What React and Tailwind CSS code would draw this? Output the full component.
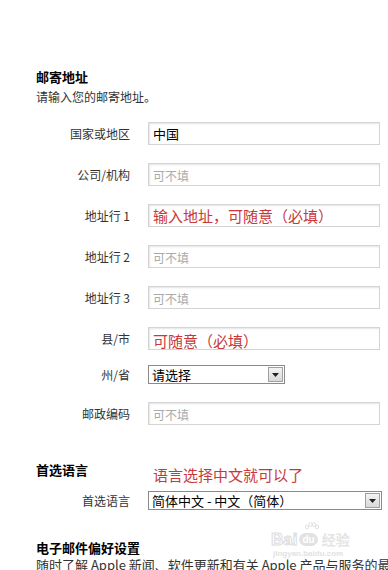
import { useState } from 'react'

const rows = [
  { label: '国家或地区', value: '中国' },
  { label: '公司/机构', placeholder: '可不填' },
  { label: '地址行 1', hint: '输入地址，可随意（必填）' },
  { label: '地址行 2', placeholder: '可不填' },
  { label: '地址行 3', placeholder: '可不填' },
  { label: '县/市', hint: '可随意（必填）', low: true },
]

function Field({ label, value, placeholder, hint, low, className = '' }) {
  return (
    <div className={`flex items-center ${className}`}>
      <div className="w-[130px] text-right text-[12px] text-[#333]">{label}</div>
      <div className="ml-[18px] w-[232px] h-[23px] border border-[#d4d4d4] shadow-[inset_1px_1px_2px_#e4e4e4] bg-white flex items-center px-[4px] overflow-hidden">
        {value && <span className="text-[13px] text-black">{value}</span>}
        {placeholder && <span className="text-[12px] text-[#aaa] mt-[3px]">{placeholder}</span>}
        {hint && (
          <span className={`text-[15px] leading-[20px] text-[#c8383a] whitespace-nowrap ${low ? 'mt-[5px]' : ''}`}>{hint}</span>
        )}
      </div>
    </div>
  )
}

function Select({ label, value, width, className = '' }) {
  return (
    <div className={`flex items-center ${className}`}>
      <div className="w-[130px] text-right text-[12px] text-[#333]">{label}</div>
      <div className={`ml-[18px] ${width} h-[19px] border border-[#8a8a8a] bg-white flex items-center pl-[3px] pr-[1px]`}>
        <span className="flex-1 text-[13px] text-black whitespace-nowrap">{value}</span>
        <div className="w-[15px] h-[15px] border border-[#a0a0a0] bg-gradient-to-b from-[#f4f4f4] to-[#d8d8d8] flex items-center justify-center">
          <svg width="7" height="4" viewBox="0 0 7 4"><path d="M0 0h7L3.5 4z" fill="#222" /></svg>
        </div>
      </div>
    </div>
  )
}

export default function App() {
  const [lang] = useState('简体中文 - 中文（简体）')
  return (
    <div className="relative w-[388px] h-[570px] overflow-hidden bg-white font-['Noto_Sans_CJK_SC','Noto_Sans',sans-serif] text-[#333]">
      <div className="pl-[36px] pt-[68px]">
        <div className="text-[13px] font-bold text-black leading-[18px]">邮寄地址</div>
        <div className="text-[12px] leading-[18px] mt-[2px]">请输入您的邮寄地址。</div>
      </div>

      <div className="flex flex-col gap-[18px] mt-[16px]">
        {rows.map(r => <Field key={r.label} {...r} />)}
      </div>
      <Select label="州/省" value="请选择" width="w-[137px]" className="mt-[15px]" />
      <Field label="邮政编码" placeholder="可不填" className="mt-[18px]" />

      <div className="flex items-end mt-[36px] pl-[36px]">
        <div className="text-[13px] font-bold text-black leading-[18px]">首选语言</div>
        <div className="ml-[65px] text-[15px] text-[#c8383a] leading-[18px] mb-[-5px]">语言选择中文就可以了</div>
      </div>
      <Select label="首选语言" value={lang} width="w-[234px]" className="mt-[12px]" />

      <div className="pl-[36px] mt-[29px]">
        <div className="text-[13px] font-bold text-black leading-[17px]">电子邮件偏好设置</div>
        <div className="text-[13px] leading-[17px] whitespace-nowrap">随时了解 Apple 新闻、软件更新和有关 Apple 产品与服务的最新信息。</div>
      </div>

      {/* watermark */}
      <div className="absolute left-[271px] top-[522px] flex flex-col items-start text-[#e6e6e6] pointer-events-none">
        <svg width="16" height="12" viewBox="0 0 16 12" className="ml-[33px] mb-[-3px]">
          <g fill="none" stroke="#e0e0e0" strokeWidth="1">
            <ellipse cx="3" cy="5" rx="1.6" ry="2" />
            <ellipse cx="6.5" cy="2.5" rx="1.6" ry="2" />
            <ellipse cx="10" cy="2.5" rx="1.6" ry="2" />
            <ellipse cx="13" cy="5" rx="1.6" ry="2" />
          </g>
        </svg>
        <div className="flex items-center gap-[2px] font-['Liberation_Sans',sans-serif] font-bold text-[17px] leading-[17px]">
          <span className="[-webkit-text-stroke:1px_#dcdcdc] text-white">Bai</span>
          <span className="text-[10px] text-white bg-[#e2e2e2] rounded-full px-[3px] leading-[13px]">du</span>
          <span className="font-['Noto_Sans_CJK_SC',sans-serif] text-[14px] text-[#e4e4e4] ml-[2px]">经验</span>
        </div>
        <div className="text-[8px] leading-[10px] text-[#e2e2e2] font-['Liberation_Sans',sans-serif] font-bold ml-[2px] mt-[1px]">jingyan.baidu.com</div>
      </div>
    </div>
  )
}
